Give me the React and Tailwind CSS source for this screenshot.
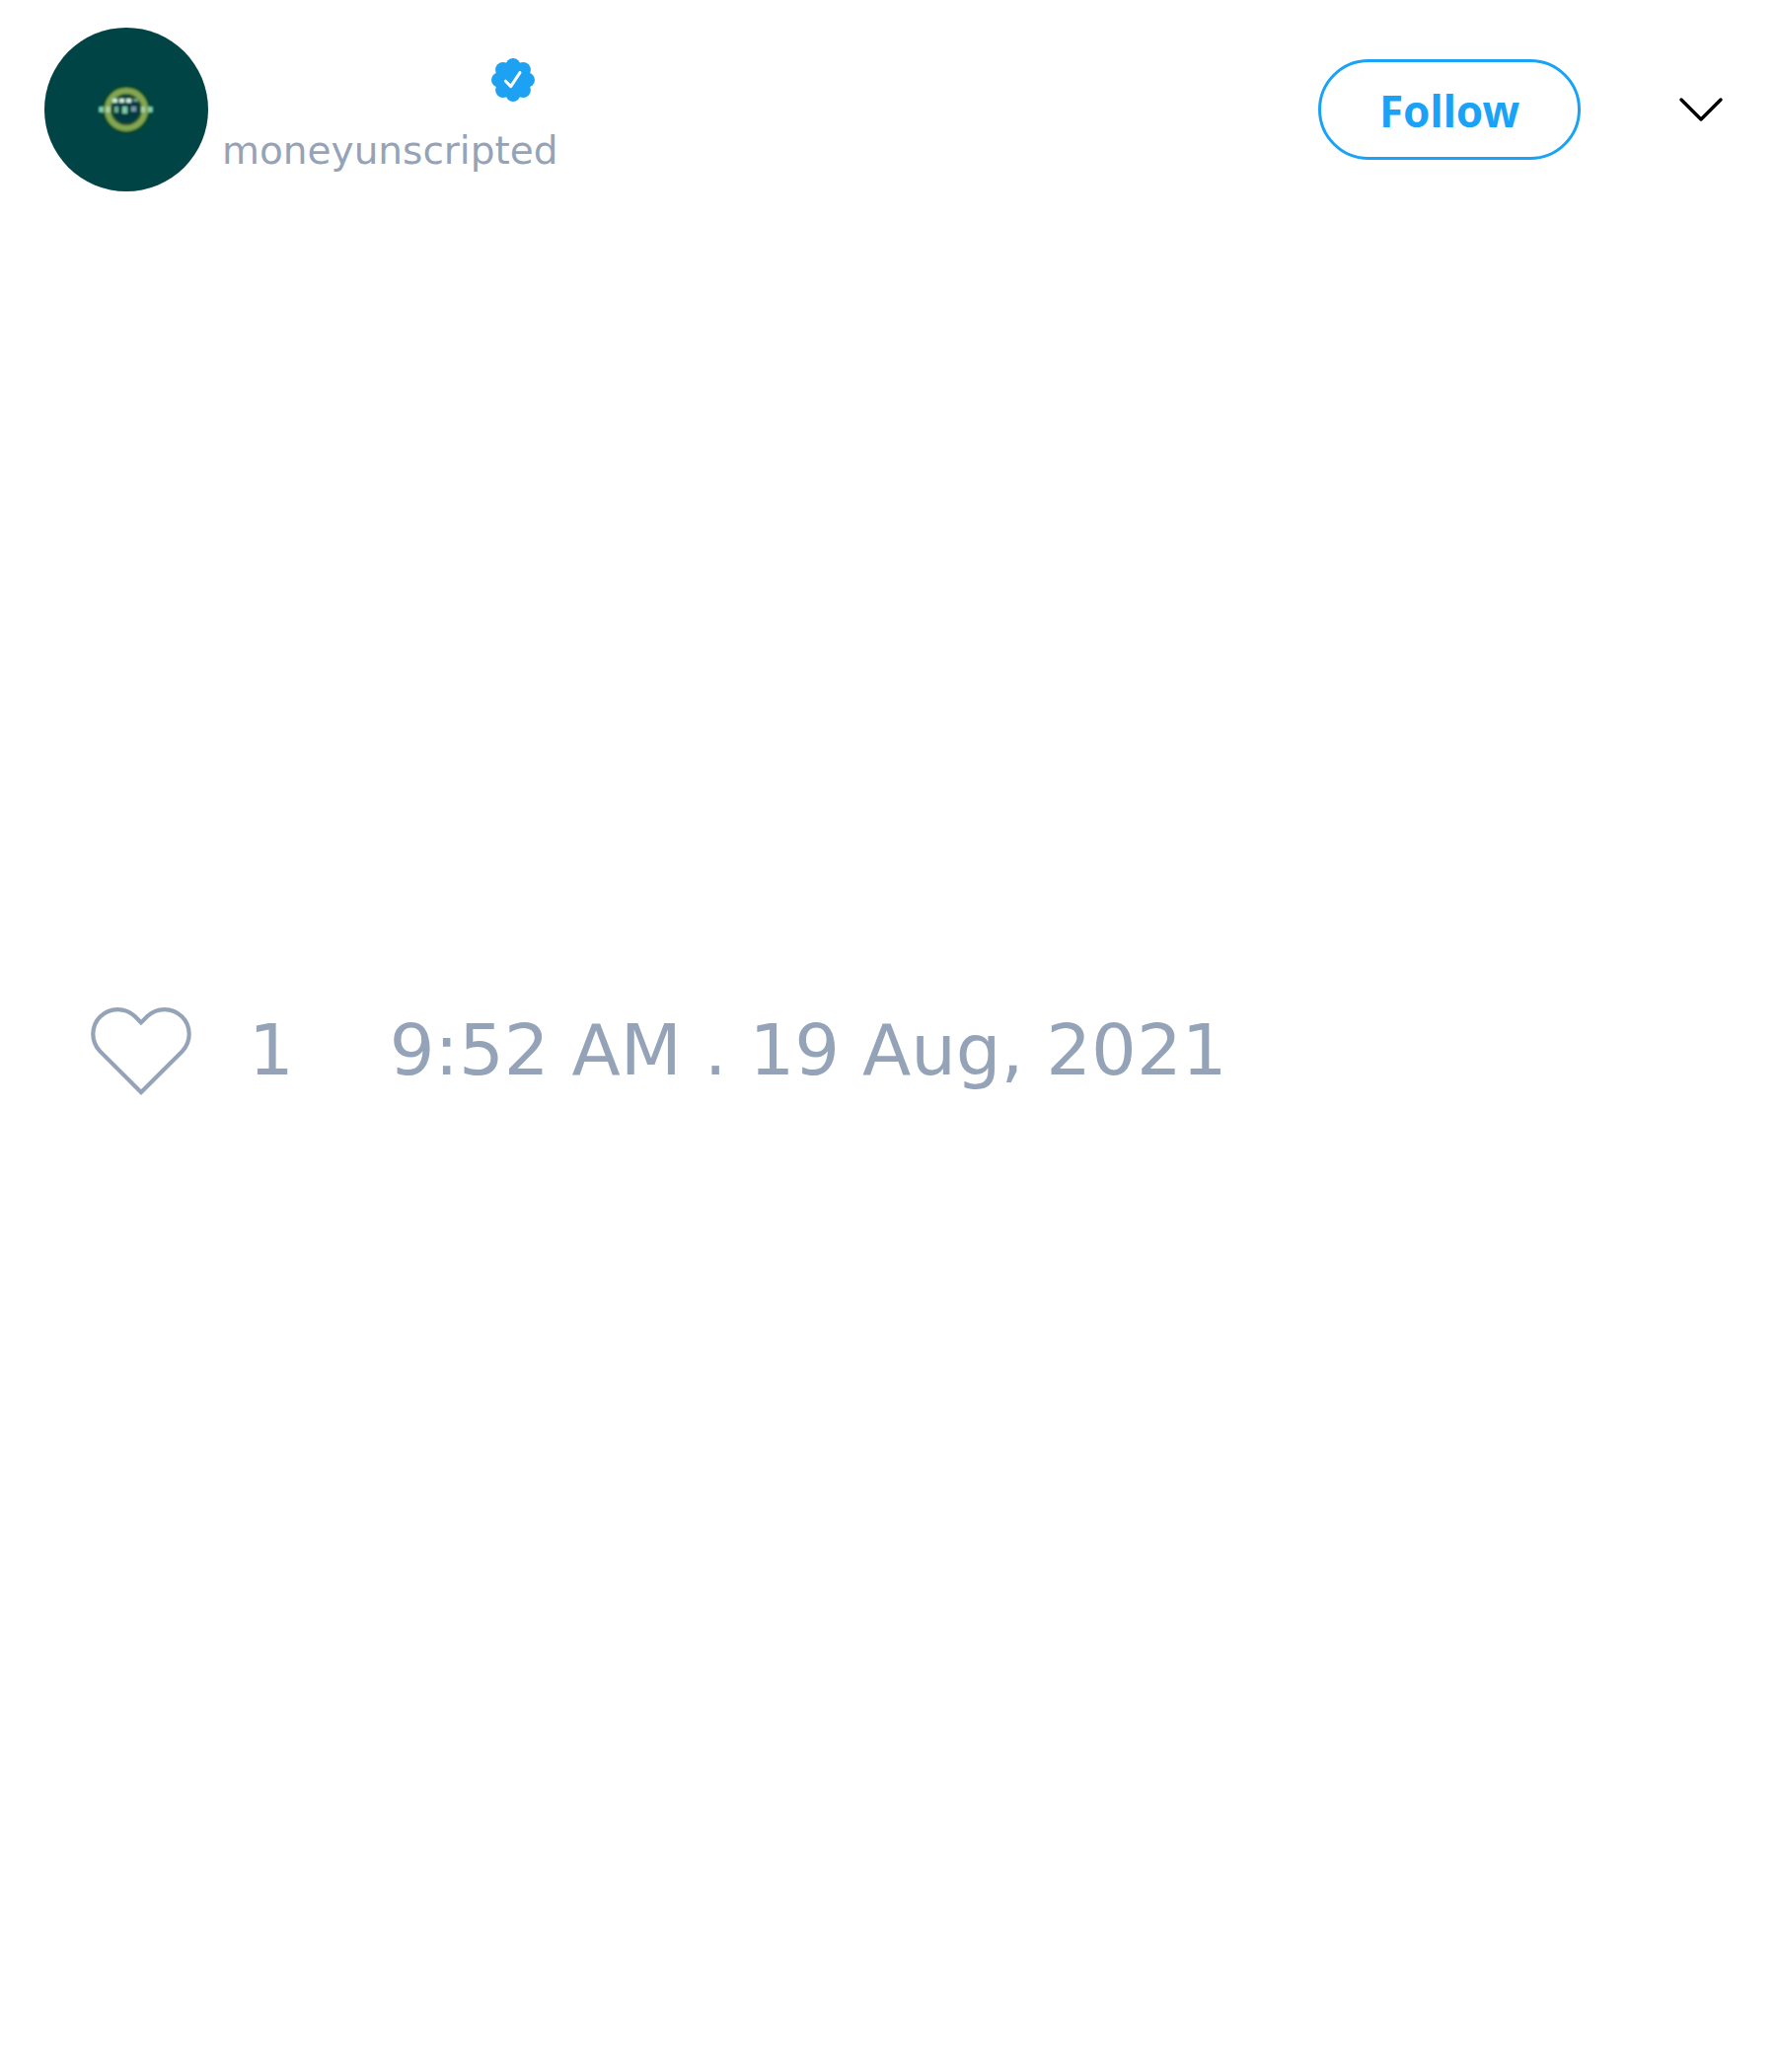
function Avatar() {
  return (
    <svg viewBox="0 0 166 166" className="size-[166px] shrink-0" role="img" aria-label="moneyunscripted avatar">
      <defs>
        <filter id="soft" x="-20%" y="-20%" width="140%" height="140%">
          <feGaussianBlur stdDeviation="1.3" />
        </filter>
      </defs>
      <circle cx="83" cy="83" r="83" fill="#004445" />
      <g filter="url(#soft)">
        <circle cx="83" cy="83" r="14" fill="#063b42" />
        <circle cx="83" cy="83" r="23" fill="none" stroke="#0a4a2c" strokeWidth="3" />
        <circle cx="83" cy="83" r="15" fill="none" stroke="#1f4a2c" strokeWidth="3" />
        <circle cx="83" cy="83" r="19" fill="none" stroke="#82a651" strokeWidth="6" />
        <g fill="#c9eed9">
          <rect x="69" y="72" width="5" height="4" />
          <rect x="76" y="72" width="5" height="4" />
          <rect x="83" y="72" width="5" height="4" />
          <rect x="90" y="72" width="5" height="3" opacity="0.5" />
        </g>
        <g fill="#7fcba4">
          <rect x="55" y="80" width="5" height="6" />
          <rect x="62" y="80" width="5" height="6" fill="#a9cf9c" />
          <rect x="71" y="80" width="4" height="6" opacity="0.8" />
          <rect x="79" y="80" width="5" height="7" />
          <rect x="88" y="80" width="5" height="5" fill="#8fb0c0" opacity="0.8" />
          <rect x="98" y="80" width="4" height="6" fill="#a9cf9c" />
          <rect x="105" y="80" width="5" height="6" />
        </g>
      </g>
    </svg>
  );
}

function VerifiedBadge() {
  return (
    <svg viewBox="-22 -22 44 44" className="size-11" role="img" aria-label="Verified account">
      <g fill="#1da1f2">
        <circle r="16.5" />
        <circle cx="0" cy="-14.5" r="7.5" />
        <circle cx="0" cy="14.5" r="7.5" />
        <circle cx="-14.5" cy="0" r="7.5" />
        <circle cx="14.5" cy="0" r="7.5" />
        <circle cx="-10.2" cy="-10.2" r="7.7" />
        <circle cx="10.2" cy="-10.2" r="7.7" />
        <circle cx="-10.2" cy="10.2" r="7.7" />
        <circle cx="10.2" cy="10.2" r="7.7" />
      </g>
      <path d="M-7.6 1.2 L-2.3 6.6 L7 -7.4" fill="none" stroke="#fff" strokeWidth="3" strokeLinecap="round" strokeLinejoin="round" />
    </svg>
  );
}

function Header() {
  return (
    <header className="flex items-start justify-between pt-7 pr-[52px] pl-[45px]">
      <div className="flex gap-[14px]">
        <Avatar />
        <div className="flex flex-col pt-[31px]">
          <div className="flex justify-end pr-6">
            <VerifiedBadge />
          </div>
          <a href="#profile" className="mt-[26px] text-[39px] leading-[48px] text-[#94a3b8]">
            moneyunscripted
          </a>
        </div>
      </div>
      <div className="flex items-center gap-[98px] pt-8">
        <button
          type="button"
          className="h-[102px] w-[266px] rounded-[51px] border-[3px] border-[#1aa2f6] pt-[2px] font-['Noto_Sans',sans-serif] text-[44px] font-bold text-[#1aa2f6]"
        >
          Follow
        </button>
        <button type="button" aria-label="More options">
          <svg viewBox="0 0 48 28" className="h-7 w-12" fill="none" stroke="#000" strokeWidth="3.4" strokeLinecap="round" strokeLinejoin="round">
            <path d="M4 4 L24 24 L44 4" />
          </svg>
        </button>
      </div>
    </header>
  );
}

function Footer() {
  return (
    <footer className="flex items-center pl-[90px] text-[72px] leading-[92px] text-[#94a3b8]">
      <button type="button" aria-label="Like" className="mr-[56px]">
        <svg viewBox="0 0 106 94" className="h-[94px] w-[106px]" fill="none" stroke="#94a3b8" strokeWidth="4.2">
          <path d="M53 18.4 L46.7 12.1 A25 25 0 0 0 11.3 47.4 L53 89.1 L94.7 47.4 A25 25 0 0 0 59.3 12.1 Z" />
        </svg>
      </button>
      <span className="mr-[97px] pb-[2px]">1</span>
      <time className="pb-[2px]" dateTime="2021-08-19T09:52">9:52 AM . 19 Aug, 2021</time>
    </footer>
  );
}

export default function App() {
  return (
    <article className="min-h-screen bg-white font-['DejaVu_Sans',sans-serif]">
      <Header />
      <div className="h-[824px]" />
      <Footer />
    </article>
  );
}
